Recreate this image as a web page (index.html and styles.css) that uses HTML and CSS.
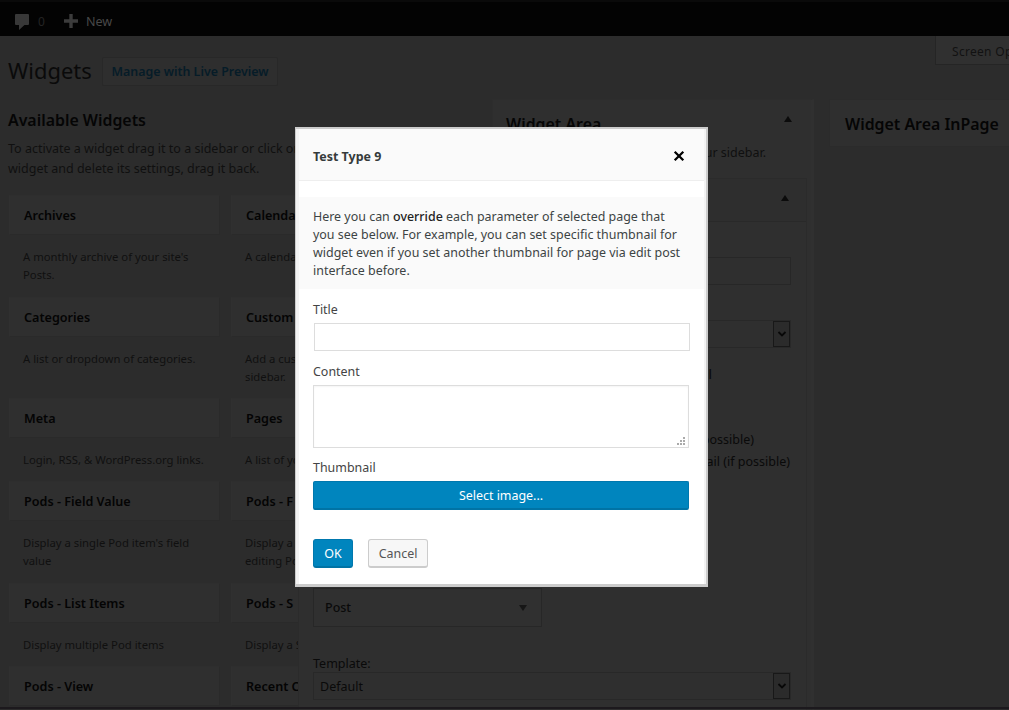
FILE: index.html
```html
<!DOCTYPE html>
<html lang="en">
<head>
<meta charset="utf-8">
<title>Widgets</title>
<link rel="stylesheet" href="styles.css">
</head>
<body>
<div class="app">
  <header class="adminbar">
    <svg class="ico-comment" width="14" height="17" viewBox="0 0 14 17"><path d="M1 0h12q1 0 1 1v9q0 1-1 1H9.500l-5.500 5v-5H1q-1 0-1-1V1q0-1 1-1z" fill="#383838"/></svg>
    <span class="count">0</span>
    <svg class="ico-plus" width="14" height="14" viewBox="0 0 14 14"><path d="M5.300 0h3.400v5.300H14v3.400H8.700V14H5.300V8.700H0V5.300h5.300z" fill="#3c3c3c"/></svg>
    <span class="new">New</span>
  </header>
  <div class="screen-options">Screen Options</div>
  <main class="columns">
    <section class="available">
      <div class="heading"><h1>Widgets</h1><a class="preview">Manage with Live Preview</a></div>
      <h2>Available Widgets</h2>
      <p class="intro">To activate a widget drag it to a sidebar or click on<br>widget and delete its settings, drag it back.</p>
      <div class="widgets">
        <div class="widget"><h3>Archives</h3><p>A monthly archive of your site's<br>Posts.</p></div>
        <div class="widget"><h3>Calendar</h3><p>A calendar</p></div>
        <div class="widget"><h3>Categories</h3><p>A list or dropdown of categories.</p></div>
        <div class="widget"><h3>Custom</h3><p>Add a custom<br>sidebar.</p></div>
        <div class="widget"><h3>Meta</h3><p>Login, RSS, &amp; WordPress.org links.</p></div>
        <div class="widget"><h3>Pages</h3><p>A list of your</p></div>
        <div class="widget"><h3>Pods - Field Value</h3><p>Display a single Pod item's field<br>value</p></div>
        <div class="widget"><h3>Pods - F</h3><p>Display a f<br>editing Pod</p></div>
        <div class="widget"><h3>Pods - List Items</h3><p>Display multiple Pod items</p></div>
        <div class="widget"><h3>Pods - S</h3><p>Display a S</p></div>
        <div class="widget"><h3>Pods - View</h3></div>
        <div class="widget"><h3>Recent C</h3></div>
      </div>
    </section>
    <section class="area">
      <div class="area-head"><h2>Widget Area</h2><i class="tri up"></i></div>
      <p>your sidebar.</p>
    </section>
    <section class="inpage"><h2>Widget Area InPage</h2></section>
  </main>

  <div class="panel">
    <div class="panel-head"><i class="tri up"></i></div>
    <div class="panel-body">
      <div class="field"></div>
      <div class="select first"><span></span><b class="drop"><svg width="10" height="6" viewBox="0 0 10 6"><path d="M1.500 1 5 4.500 8.500 1" fill="none" stroke="#080808" stroke-width="1.800"/></svg></b></div>
      <div class="opt strong">ail</div>
      <div class="opt second">possible)</div>
      <div class="opt third">ail (if possible)</div>
      <div class="post"><span>Post</span><i class="tri down"></i></div>
      <div class="template">Template:</div>
      <div class="select"><span>Default</span><b class="drop"><svg width="10" height="6" viewBox="0 0 10 6"><path d="M1.500 1 5 4.500 8.500 1" fill="none" stroke="#080808" stroke-width="1.800"/></svg></b></div>
    </div>
  </div>
  <div class="edge"></div>

  <div class="modal">
    <div class="modal-head"><strong>Test Type 9</strong>
      <svg width="12" height="12" viewBox="0 0 12 12"><path d="M1.700 1.700l8.600 8.600M10.300 1.700l-8.600 8.600" stroke="#000" stroke-width="2.300"/></svg>
    </div>
    <div class="notice"><div>Here you can <b>override</b> each parameter of selected page that</div><div>you see below. For example, you can set specific thumbnail for</div><div>widget even if you set another thumbnail for page via edit post</div><div>interface before.</div></div>
    <div class="form">
      <div class="label">Title</div>
      <div class="input"></div>
      <div class="label">Content</div>
      <div class="textarea"><svg width="9" height="9" viewBox="0 0 9 9"><path d="M6 0h2v2H6zM3 3h2v2H3zM6 3h2v2H6zM0 6h2v2H0zM3 6h2v2H3zM6 6h2v2H6z" fill="#aaa"/></svg></div>
      <div class="label last">Thumbnail</div>
      <div class="btn primary wide">Select image...</div>
      <div class="actions"><div class="btn primary ok">OK</div><div class="btn cancel">Cancel</div></div>
    </div>
  </div>
</div>
</body>
</html>
```

FILE: styles.css
```css
* { box-sizing: border-box; }
body { margin: 0; background: #2c2c2c; font-family: "Noto Sans", "Open Sans", sans-serif; font-size: 12px; color: #101010; }
h1, h2, h3, p { margin: 0; }
.app { position: relative; width: 1009px; height: 710px; overflow: hidden; white-space: nowrap; }
.adminbar { height: 36px; padding: 4px 0 0 15px; display: flex; align-items: center; background: #030303; border-top: 2px solid #0a0a0a; color: #484848; }
.ico-comment { margin-top: 3px; }
.count { margin-left: 9px; color: #242424; }
.ico-plus { margin-left: 19px; margin-top: -1px; }
.new { margin-left: 8px; font-size: 12.600px; }
.screen-options { position: absolute; left: 935px; top: 36px; width: 110px; height: 29px; padding-left: 16px; line-height: 31px; font-size: 12px; letter-spacing: .3px; color: #121212; background: #303030; border: 1px solid #252525; border-top: 0; }
.columns { display: grid; grid-template-columns: 484px 322px 1fr; height: 674px; padding-left: 8px; }
.available { padding-top: 20px; }
.heading { display: flex; align-items: center; height: 30px; }
h1 { width: 94px; font-size: 21.900px; font-weight: 400; line-height: 30px; color: #0a0a0a; }
.preview { width: 176px; height: 29px; border: 1px solid #282828; border-radius: 2px; background: #2e2e2e; color: #061c28; font-weight: 600; line-height: 27px; text-align: center; font-size: 12.400px; }
h2 { font-size: 15.900px; font-weight: 600; color: #050505; }
.available h2 { margin-top: 22px; line-height: 24px; }
.intro { margin-top: 7px; line-height: 20px; font-size: 12.500px; }
.widgets { margin: 16px 0 0 1px; display: grid; grid-template-columns: 211px 211px; column-gap: 11px; grid-template-rows: 102px 101px 83px 102px 83px 41px; }
.widget h3 { height: 40px; padding-left: 14px; line-height: 39px; font-size: 12.600px; font-weight: 600; color: #040404; background: #2f2f2f; border: 1px solid #2a2a2a; border-left-color: #303030; border-top-color: #2e2e2e; }
.widget p { padding: 13px 0 0 14px; font-size: 11.300px; line-height: 18px; }
.area { margin-top: 63px; background: #2f2f2f; border: 1px solid #2d2d2d; border-right: 3px solid #303030; }
.area-head { display: flex; justify-content: space-between; align-items: center; height: 46px; padding: 2px 19px 0 13px; }
.area-head .tri { margin-top: -10px; }
.area p { margin: -3px 45px 0 0; text-align: right; line-height: 20px; font-size: 12.500px; }
.tri { width: 0; height: 0; border-left: 4px solid transparent; border-right: 4px solid transparent; }
.up { border-bottom: 6px solid #0b0b0b; }
.down { border-top: 6px solid #161616; }
.inpage { margin: 63px 0 0 15px; height: 48px; padding-left: 15px; background: #2f2f2f; border: 1px solid #2b2b2b; border-right: 0; line-height: 48px; }
.panel { position: absolute; left: 298px; top: 178px; width: 509px; height: 540px; background: #2f2f2f; border: 1px solid #2b2b2b; }
.panel-head { height: 43px; padding: 16px 17px 0 0; display: flex; justify-content: flex-end; background: #2e2e2e; border-bottom: 1px solid #292929; }
.panel-body { padding: 35px 15px 0 14px; font-size: 12.500px; color: #0a0a0a; }
.field { height: 28px; border: 1px solid #272727; }
.select { display: flex; align-items: center; height: 28px; padding-left: 6px; border: 1px solid #282828; }
.select.first { margin-top: 35px; }
.select span { flex: 1; padding-top: 1px; }
.drop { display: grid; place-items: center; width: 17px; height: 26px; border: 1px solid #181818; background: #2b2b2b; }
.opt { width: 477px; height: 22px; line-height: 22px; text-align: right; }
.opt.strong { width: 399px; margin-top: 16px; font-weight: 500; }
.opt.second { width: 441px; margin-top: 43px; }
.post { display: flex; justify-content: space-between; align-items: center; margin-top: 115px; width: 229px; height: 39px; padding: 0 14px 0 11px; border: 1px solid #272727; font-weight: 500; background: #303030; }
.template { margin-top: 28px; line-height: 18px; margin-bottom: -1px; }
.edge { position: absolute; left: 0; bottom: 1px; width: 1009px; height: 2px; background: #1c191d; }
.modal { position: absolute; left: 295px; top: 127px; width: 413px; height: 460px; border: solid #ccc; border-width: 2px 2px 3px 1px; background: #fff; color: #444; font-size: 12.450px; box-shadow: inset 3px 0 #f3f3f3, inset -2px 0 #f3f3f3; }
.modal-head { height: 52px; margin: 0 2px 0 3px; padding: 2px 19px 0 14px; display: flex; align-items: center; justify-content: space-between; background: #fafafa; border-bottom: 1px solid #eee; color: #353b3b; }
.modal-head strong { padding-top: 1px; }
.notice { height: 92px; margin: 16px 2px 0 3px; padding: 11px 0 0 14px; background: #fafafa; line-height: 18px; color: #3d4444; }
.notice b { font-weight: 500; color: #222; }
.form { padding: 12px 17px 0 17px; }
.label { height: 18px; line-height: 18px; }
.input { margin: 4px -1px 12px 1px; height: 28px; border: 1px solid #ddd; }
.textarea { margin: 4px 0 11px; height: 63px; border: 1px solid #ddd; display: flex; justify-content: flex-end; align-items: flex-end; padding: 1px 2px; box-shadow: inset 0 1px 2px #f5f5f5; }
.btn { display: flex; align-items: center; justify-content: center; height: 29px; border-radius: 3px; }
.primary { background: #0085be; border: 1px solid #0078ae; border-bottom: 2px solid #0073a5; color: #fff; }
.wide { margin-top: 4px; border-radius: 2px; }
.actions { display: flex; gap: 15px; margin-top: 29px; }
.ok { width: 40px; }
.cancel { width: 60px; border: 1px solid #ccc; border-bottom-width: 2px; background: #f7f7f7; color: #555; }
```
